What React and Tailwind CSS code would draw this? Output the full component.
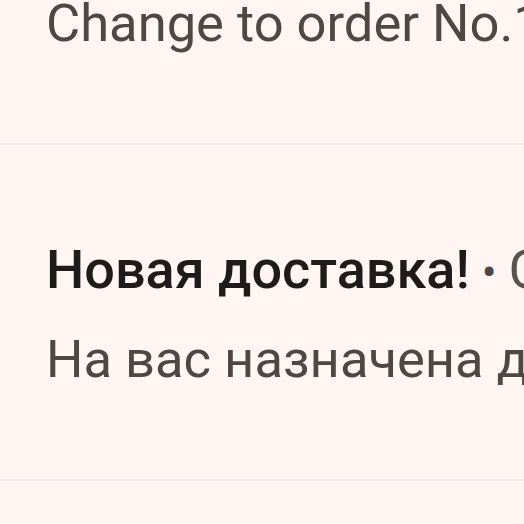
import React from "react";

const items = [
  {
    title: "Заказ изменён",
    time: "Сейчас",
    body: "Change to order No.1024 was saved",
  },
  {
    title: "Новая доставка!",
    time: "Сейчас",
    body: "На вас назначена доставка заказа",
  },
];

const NotificationRow = ({ title, time, body, className = "" }) => {
  return (
    <div className={`pl-[46px] pt-[95px] pb-[90px] border-b-2 border-[#f6e9e5] ${className}`}>
      <div className="flex items-baseline whitespace-nowrap text-[54px] leading-[60px]">
        <span className="font-medium text-[#1e1b1a]">{title}</span>
        <span className="text-[#4f4745] mx-[12px] text-[44px]">•</span>
        <span className="text-[#5a5250]">{time}</span>
      </div>
      <p className="mt-[26px] whitespace-nowrap text-[52.5px] leading-[60px] text-[#4f4745]">
        {body}
      </p>
    </div>
  );
};

const App = () => {
  return (
    <div
      className="h-screen w-full overflow-hidden bg-[#fff5f2]"
      style={{ fontFamily: "Roboto, 'Noto Sans', sans-serif" }}
    >
      {items.map((item, i) => (
        <NotificationRow
          key={i}
          {...item}
          className={i === 0 ? "-mt-[191px]" : ""}
        />
      ))}
    </div>
  );
};

export default App;
